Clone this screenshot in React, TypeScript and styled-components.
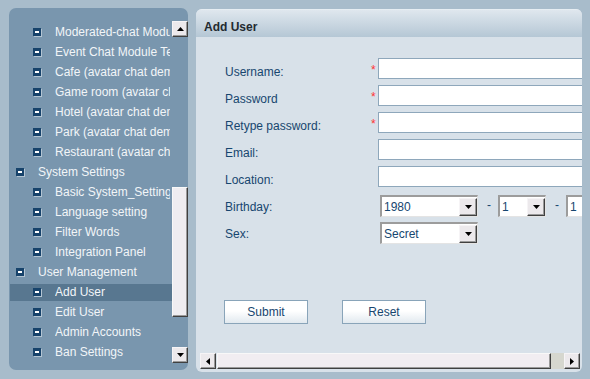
import * as React from 'react';
import styled, { createGlobalStyle } from 'styled-components';

const GlobalStyle = createGlobalStyle`
  html, body {
    margin: 0;
    padding: 0;
  }
  body {
    width: 590px;
    height: 379px;
    overflow: hidden;
    background: #a8bccb;
    font-family: 'Liberation Sans', Arial, sans-serif;
    font-size: 12px;
  }
`;

const Page = styled.div`
  display: flex;
  align-items: flex-start;
  gap: 8px;
  padding: 8px 8px 0 9px;
  height: 379px;
  box-sizing: border-box;
`;

/* ---------- sidebar tree ---------- */

const Sidebar = styled.div`
  width: 179px;
  height: 362px;
  box-sizing: border-box;
  padding: 13px 0 7px 1px;
  background: #7996ae;
  border-radius: 7px;
  display: flex;
  flex: none;
`;

const TreeViewport = styled.div`
  width: 162px;
  padding-top: 1px;
  overflow: hidden;
`;

const TreeRow = styled.div<{ $level: number; $active?: boolean }>`
  height: 20px;
  display: flex;
  align-items: center;
  gap: 13px;
  padding-left: ${({ $level }) => ($level === 0 ? 6 : 23)}px;
  white-space: nowrap;
  color: #f2f5f8;
  background: ${({ $active }) =>
    $active ? 'linear-gradient(to bottom, transparent 2px, #587790 2px, #587790 19px, transparent 19px)' : 'none'};
`;

const TreeLabel = styled.span`
  flex: 1;
  overflow: hidden;
  margin-right: 2px;
`;

const VScroll = styled.div`
  width: 16px;
  display: flex;
  flex-direction: column;
`;

const ScrollButton = styled.div`
  width: 16px;
  height: 16px;
  box-sizing: border-box;
  flex: none;
  display: flex;
  align-items: center;
  justify-content: center;
  background: #ece9ec;
  border: 1px solid;
  border-color: #f6f4f6 #404040 #404040 #f6f4f6;
  box-shadow: inset -1px -1px 0 #9a9a9a;
`;

const VTrack = styled.div<{ $offset: number }>`
  flex: 1;
  padding-top: ${({ $offset }) => $offset}px;
`;

const VThumb = styled.div<{ $size: number }>`
  height: ${({ $size }) => $size}px;
  box-sizing: border-box;
  background: #efedf1;
  border: 1px solid;
  border-color: #f8f8f8 #404040 #404040 #f8f8f8;
  box-shadow: inset -1px -1px 0 #9a9a9a;
`;

/* ---------- main panel ---------- */

const Main = styled.div`
  width: 386px;
  height: 363px;
  margin-top: 1px;
  background: #d8e1e9;
  border-radius: 6px;
  overflow: hidden;
  display: flex;
  flex-direction: column;
`;

const Header = styled.div`
  height: 28px;
  box-sizing: border-box;
  padding: 6px 0 0 8px;
  line-height: 22px;
  font-weight: bold;
  color: #232a30;
  background: linear-gradient(to bottom, #dfe7ee, #b5c7d5);
  border-top: 1px solid #e6edf2;
`;

const Body = styled.div`
  flex: 1;
  overflow: hidden;
  padding: 21px 0 0 29px;
`;

const FormGrid = styled.div`
  display: grid;
  grid-template-columns: 146px 7px 240px;
  grid-auto-rows: 27px;
  white-space: nowrap;
`;

const Label = styled.div`
  padding-top: 7px;
  line-height: 14px;
  color: #17466f;
`;

const Star = styled.div`
  padding-top: 5px;
  line-height: 14px;
  color: #ff3434;
`;

const TextInput = styled.input`
  width: 240px;
  height: 21px;
  box-sizing: border-box;
  margin: 0;
  border: 1px solid #8ea7bb;
  background: #fff;
`;

const SelectRow = styled.div`
  display: flex;
  align-items: flex-start;
  padding: 2px 0 0 2px;
`;

const SelectBox = styled.div<{ $width: number }>`
  width: ${({ $width }) => $width}px;
  height: 22px;
  box-sizing: border-box;
  flex: none;
  display: flex;
  align-items: center;
  background: #fff;
  border: 2px solid;
  border-width: 2px 1px 1px 2px;
  border-color: #9c9c9c #e4e4e4 #e4e4e4 #9c9c9c;
  color: #17466f;
`;

const SelectText = styled.span`
  flex: 1;
  padding-left: 2px;
  overflow: hidden;
`;

const DropButton = styled(ScrollButton)`
  width: 18px;
  height: 18px;
`;

const Dash = styled.span`
  margin: 3px 7px 0 9px;
  color: #17466f;
`;

const ButtonRow = styled.div`
  display: flex;
  gap: 34px;
  margin: 53px 0 0 -1px;
`;

const FormButton = styled.button`
  width: 84px;
  height: 24px;
  padding: 0;
  border: 1px solid #89a4b9;
  background: linear-gradient(to bottom, #ffffff 0%, #ffffff 45%, #e1e9ef 100%);
  color: #17466f;
  font-family: inherit;
  font-size: 12px;
`;

const HScroll = styled.div`
  height: 16px;
  margin: 0 2px 3px 4px;
  display: flex;
  flex: none;
`;

const HThumb = styled.div<{ $size: number }>`
  width: ${({ $size }) => $size}px;
  margin-left: 1px;
  box-sizing: border-box;
  background: #f1edf1;
  border: 1px solid;
  border-color: #f8f8f8 #404040 #404040 #f8f8f8;
  box-shadow: inset -1px -1px 0 #9a9a9a;
`;

const HTrack = styled.div`
  flex: 1;
  background: #d6d7cf;
`;

type Dir = 'up' | 'down' | 'left' | 'right';

const Arrow = ({ dir }: { dir: Dir }) => {
  const vertical = dir === 'up' || dir === 'down';
  const points = {
    up: '0,4 7,4 3.5,0',
    down: '0,0 7,0 3.5,4',
    left: '4,0 4,7 0,3.5',
    right: '0,0 0,7 4,3.5',
  }[dir];
  return (
    <svg width={vertical ? 7 : 4} height={vertical ? 4 : 7} viewBox={vertical ? '0 0 7 4' : '0 0 4 7'}>
      <polygon points={points} fill="#000" />
    </svg>
  );
};

const CollapseIcon = () => (
  <svg width="9" height="9" viewBox="0 0 9 9" style={{ flex: 'none' }}>
    <rect x="1" y="1" width="8" height="8" fill="#b3c4d2" />
    <rect x="0" y="0" width="8" height="8" fill="#17436b" />
    <rect x="2" y="3" width="4" height="2" fill="#fff" />
  </svg>
);

const tree: { label: string; level: number; active?: boolean }[] = [
  { label: 'Moderated-chat Module', level: 1 },
  { label: 'Event Chat Module Test', level: 1 },
  { label: 'Cafe (avatar chat demo)', level: 1 },
  { label: 'Game room (avatar chat demo)', level: 1 },
  { label: 'Hotel (avatar chat demo)', level: 1 },
  { label: 'Park (avatar chat demo)', level: 1 },
  { label: 'Restaurant (avatar chat demo)', level: 1 },
  { label: 'System Settings', level: 0 },
  { label: 'Basic System_Settings', level: 1 },
  { label: 'Language setting', level: 1 },
  { label: 'Filter Words', level: 1 },
  { label: 'Integration Panel', level: 1 },
  { label: 'User Management', level: 0 },
  { label: 'Add User', level: 1, active: true },
  { label: 'Edit User', level: 1 },
  { label: 'Admin Accounts', level: 1 },
  { label: 'Ban Settings', level: 1 },
];

const textFields = [
  { label: 'Username:', required: true },
  { label: 'Password', required: true },
  { label: 'Retype password:', required: true },
  { label: 'Email:' },
  { label: 'Location:' },
];

const Select = ({ value, width }: { value: string; width: number }) => (
  <SelectBox $width={width}>
    <SelectText>{value}</SelectText>
    <DropButton>
      <Arrow dir="down" />
    </DropButton>
  </SelectBox>
);

export default function App() {
  return (
    <>
      <GlobalStyle />
      <Page>
        <Sidebar>
          <TreeViewport>
            {tree.map((item) => (
              <TreeRow key={item.label} $level={item.level} $active={item.active}>
                <CollapseIcon />
                <TreeLabel>{item.label}</TreeLabel>
              </TreeRow>
            ))}
          </TreeViewport>
          <VScroll>
            <ScrollButton>
              <Arrow dir="up" />
            </ScrollButton>
            <VTrack $offset={150}>
              <VThumb $size={130} />
            </VTrack>
            <ScrollButton>
              <Arrow dir="down" />
            </ScrollButton>
          </VScroll>
        </Sidebar>

        <Main>
          <Header>Add User</Header>
          <Body>
            <FormGrid>
              {textFields.map((f) => (
                <React.Fragment key={f.label}>
                  <Label>{f.label}</Label>
                  <Star>{f.required ? '*' : ''}</Star>
                  <TextInput type={f.label.includes('assword') ? 'password' : 'text'} />
                </React.Fragment>
              ))}
              <Label>Birthday:</Label>
              <Star />
              <SelectRow>
                <Select value="1980" width={98} />
                <Dash>-</Dash>
                <Select value="1" width={48} />
                <Dash>-</Dash>
                <Select value="1" width={48} />
              </SelectRow>
              <Label>Sex:</Label>
              <Star />
              <SelectRow>
                <Select value="Secret" width={98} />
              </SelectRow>
            </FormGrid>
            <ButtonRow>
              <FormButton>Submit</FormButton>
              <FormButton>Reset</FormButton>
            </ButtonRow>
          </Body>
          <HScroll>
            <ScrollButton>
              <Arrow dir="left" />
            </ScrollButton>
            <HThumb $size={334} />
            <HTrack />
            <ScrollButton>
              <Arrow dir="right" />
            </ScrollButton>
          </HScroll>
        </Main>
      </Page>
    </>
  );
}
